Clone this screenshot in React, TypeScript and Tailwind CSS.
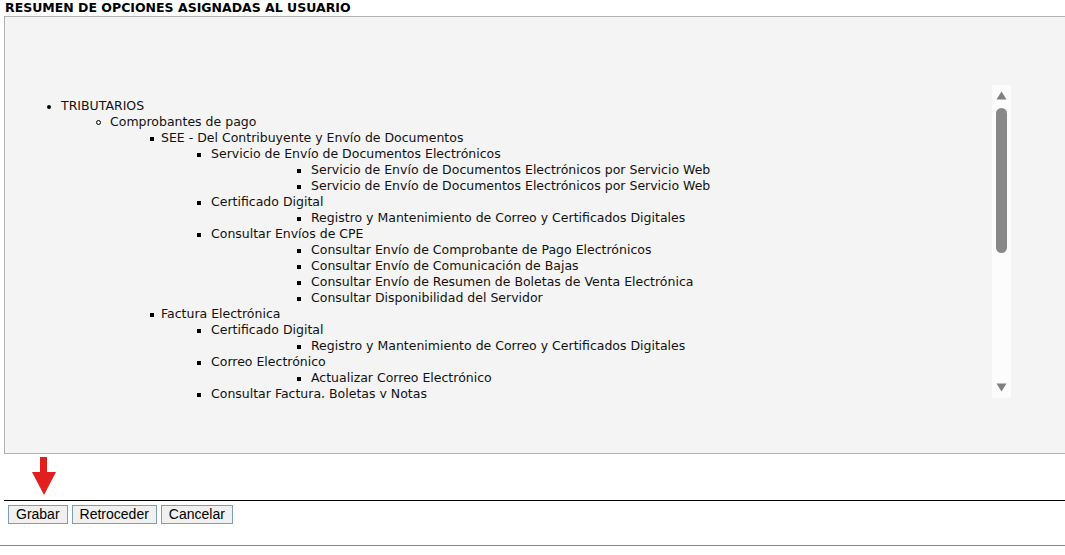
import React from "react";

type Item = { level: 1 | 2 | 3 | 4 | 5; text: string };

const items: Item[] = [
  { level: 1, text: "TRIBUTARIOS" },
  { level: 2, text: "Comprobantes de pago" },
  { level: 3, text: "SEE - Del Contribuyente y Envío de Documentos" },
  { level: 4, text: "Servicio de Envío de Documentos Electrónicos" },
  { level: 5, text: "Servicio de Envío de Documentos Electrónicos por Servicio Web" },
  { level: 5, text: "Servicio de Envío de Documentos Electrónicos por Servicio Web" },
  { level: 4, text: "Certificado Digital" },
  { level: 5, text: "Registro y Mantenimiento de Correo y Certificados Digitales" },
  { level: 4, text: "Consultar Envíos de CPE" },
  { level: 5, text: "Consultar Envío de Comprobante de Pago Electrónicos" },
  { level: 5, text: "Consultar Envío de Comunicación de Bajas" },
  { level: 5, text: "Consultar Envío de Resumen de Boletas de Venta Electrónica" },
  { level: 5, text: "Consultar Disponibilidad del Servidor" },
  { level: 3, text: "Factura Electrónica" },
  { level: 4, text: "Certificado Digital" },
  { level: 5, text: "Registro y Mantenimiento de Correo y Certificados Digitales" },
  { level: 4, text: "Correo Electrónico" },
  { level: 5, text: "Actualizar Correo Electrónico" },
  { level: 4, text: "Consultar Factura, Boletas y Notas" },
];

// text start offsets inside the list area (list area starts at x=5)
const indent: Record<Item["level"], string> = {
  1: "pl-[42px]",
  2: "pl-[91px]",
  3: "pl-[142px]",
  4: "pl-[192px]",
  5: "pl-[292px]",
};

const bulletPad: Record<Item["level"], string> = {
  1: "pl-[0px]",
  2: "pl-[0px]",
  3: "pl-[3px]",
  4: "pl-[0px]",
  5: "pl-[0px]",
};

function Bullet({ level }: { level: Item["level"] }) {
  if (level === 1) {
    return <span className="block w-[4px] h-[4px] rounded-full bg-black" />;
  }
  if (level === 2) {
    return (
      <span className="block w-[5px] h-[5px] rounded-full border border-black" />
    );
  }
  return <span className="block w-[4px] h-[4px] bg-black" />;
}

function TreeRow({ item }: { item: Item }) {
  return (
    <div className={`flex items-center h-[16px] ${indent[item.level]}`}>
      <span
        className={`w-[14px] flex items-center mt-[1px] ${bulletPad[item.level]}`}
      >
        <Bullet level={item.level} />
      </span>
      <span className="whitespace-nowrap">{item.text}</span>
    </div>
  );
}

function Scrollbar() {
  return (
    <div className="w-[19px] h-full bg-[#fcfcfc] flex flex-col items-center">
      <svg width="11" height="9" viewBox="0 0 11 9" className="mt-[6px]">
        <path d="M5.5 0.5 L10.5 8.5 L0.5 8.5 Z" fill="#808080" />
      </svg>
      <div className="mt-[8px] w-[11px] h-[145px] rounded-full bg-[#888888]" />
      <div className="flex-1" />
      <svg width="11" height="9" viewBox="0 0 11 9" className="mb-[6px]">
        <path d="M0.5 0.5 L10.5 0.5 L5.5 8.5 Z" fill="#808080" />
      </svg>
    </div>
  );
}

export default function App() {
  return (
    <div className="w-[1065px] h-[555px] overflow-hidden bg-white text-black">
      <div
        className="h-[16px] pl-[5px] pt-[1px] text-[12.5px] leading-[14px] font-bold"
        style={{ fontFamily: '"DejaVu Sans", Verdana, sans-serif' }}
      >
        RESUMEN DE OPCIONES ASIGNADAS AL USUARIO
      </div>

      <div className="ml-[4px] w-[1075px] h-[438px] border border-[#b3b3b3] bg-[#f4f4f4] pt-[68px]">
        <div className="flex h-[313px]">
          <div
            className="w-[987px] h-full overflow-hidden pt-[13px] text-[12.5px] leading-[16px] text-[#111]"
            style={{ fontFamily: '"DejaVu Sans", Verdana, sans-serif' }}
          >
            {items.map((it, i) => (
              <TreeRow key={i} item={it} />
            ))}
          </div>
          <Scrollbar />
        </div>
      </div>

      <div className="h-[46px] pl-[32px] pt-[3px]">
        <svg width="24" height="42" viewBox="0 0 24 42">
          <rect x="8" y="0" width="7" height="16" fill="#e21f1f" />
          <path d="M0 15 L24 15 L12 38 Z" fill="#e21f1f" />
        </svg>
      </div>

      <div className="ml-[4px] border-t border-black" />

      <div
        className="flex gap-[4px] pl-[8px] pt-[4px] h-[44px]"
        style={{ fontFamily: '"Liberation Sans", Arial, sans-serif' }}
      >
        <button className="h-[19px] px-[7px] text-[14px] leading-[17px] bg-[#f0f0f0] border border-[#7f9db9]">
          Grabar
        </button>
        <button className="h-[19px] px-[7px] text-[14px] leading-[17px] bg-[#f0f0f0] border border-[#7f9db9]">
          Retroceder
        </button>
        <button className="h-[19px] px-[7px] text-[14px] leading-[17px] bg-[#f0f0f0] border border-[#7f9db9]">
          Cancelar
        </button>
      </div>

      <div className="border-t border-[#6f8fa3]" />
    </div>
  );
}
